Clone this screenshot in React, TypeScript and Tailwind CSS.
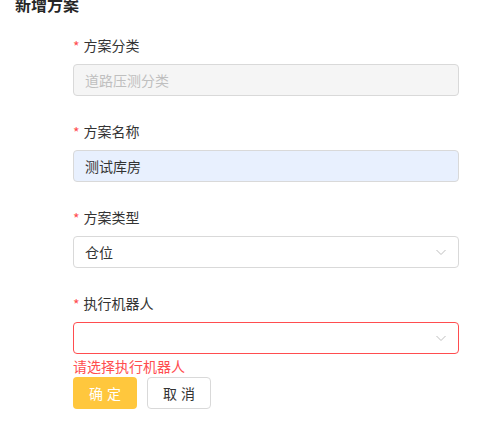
import React from "react";

const font = { fontFamily: '"Noto Sans CJK SC", "Noto Sans", sans-serif' };

function Chevron() {
  return (
    <svg width="12" height="12" viewBox="0 0 12 12" fill="none">
      <path d="M1.5 4 L6 8.5 L10.5 4" stroke="#bfbfbf" strokeWidth="1" />
    </svg>
  );
}

function Label({ text }: { text: string }) {
  return (
    <div className="flex items-center h-[22px] text-[14px] text-[#333333] mb-[8px]">
      <span className="text-[#ff4d4f] mr-[4px] text-[14px] leading-none relative top-[1px]">*</span>
      {text}
    </div>
  );
}

export default function App() {
  return (
    <div className="w-[499px] h-[440px] bg-white overflow-hidden" style={font}>
      <div className="mt-[-8px] ml-[15px] h-[24px] text-[16px] font-bold leading-[24px] text-[#262626]">
        新增方案
      </div>
      <div className="ml-[73px] w-[386px] mt-[18px]">
        <Label text="方案分类" />
        <div className="h-[32px] rounded-[4px] border border-[#d9d9d9] bg-[#f5f5f5] flex items-center px-[11px] text-[14px] text-[#bfbfbf]">
          道路压测分类
        </div>
        <div className="h-[24px]" />
        <Label text="方案名称" />
        <div className="h-[32px] rounded-[4px] border border-[#d9d9d9] bg-[#e8f0fe] flex items-center px-[11px] text-[14px] text-[#333333]">
          测试库房
        </div>
        <div className="h-[24px]" />
        <Label text="方案类型" />
        <div className="h-[32px] rounded-[4px] border border-[#d9d9d9] bg-white flex items-center justify-between px-[11px] text-[14px] text-[#333333]">
          <span>仓位</span>
          <Chevron />
        </div>
        <div className="h-[24px]" />
        <Label text="执行机器人" />
        <div className="h-[32px] rounded-[4px] border border-[#ff4d4f] bg-white flex items-center justify-end px-[11px]">
          <Chevron />
        </div>
        <div className="h-[22px] leading-[22px] text-[14px] text-[#ff4d4f] mt-[1px]">请选择执行机器人</div>
        <div className="flex gap-[10px] mt-[0px]">
          <button className="w-[64px] h-[32px] rounded-[4px] bg-[#ffc73d] text-white text-[14px] tracking-[4px] pl-[4px]">
            确定
          </button>
          <button className="w-[64px] h-[32px] rounded-[4px] border border-[#d9d9d9] bg-white text-[#333333] text-[14px] tracking-[4px] pl-[4px]">
            取消
          </button>
        </div>
      </div>
    </div>
  );
}
